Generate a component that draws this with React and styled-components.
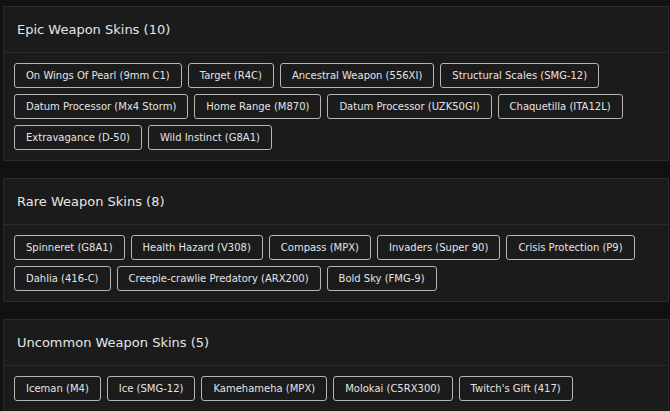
import styled, { createGlobalStyle } from "styled-components";

const GlobalStyle = createGlobalStyle`
  html, body {
    margin: 0;
    padding: 0;
    background-color: #111111;
  }
  body {
    font-family: "DejaVu Sans", "Liberation Sans", sans-serif;
    color: #e2e2e2;
  }
`;

const Page = styled.div`
  display: flex;
  flex-direction: column;
  gap: 17px;
  padding: 6px 1px 0 3px;
`;

const Card = styled.section`
  background-color: #1b1b1b;
  border: 1px solid #2b2b2b;
`;

const CardHeader = styled.header`
  display: flex;
  align-items: center;
  height: 45px;
  padding: 0 13px;
  border-bottom: 1px solid #2b2b2b;
`;

const Title = styled.h2`
  margin: 0;
  font-size: 13px;
  font-weight: 400;
  color: #e6e6e6;
`;

const SkinList = styled.div`
  display: flex;
  flex-wrap: wrap;
  gap: 6px;
  padding: 10px 10px;
`;

const SkinTag = styled.span`
  display: inline-flex;
  align-items: center;
  height: 25px;
  box-sizing: border-box;
  padding: 0 11px;
  border: 1px solid #b5b5b5;
  border-radius: 3px;
  font-size: 10px;
  color: #e4e4e4;
  white-space: nowrap;
`;

const groups = [
  {
    name: "Epic Weapon Skins",
    skins: [
      "On Wings Of Pearl (9mm C1)",
      "Target (R4C)",
      "Ancestral Weapon (556XI)",
      "Structural Scales (SMG-12)",
      "Datum Processor (Mx4 Storm)",
      "Home Range (M870)",
      "Datum Processor (UZK50GI)",
      "Chaquetilla (ITA12L)",
      "Extravagance (D-50)",
      "Wild Instinct (G8A1)",
    ],
  },
  {
    name: "Rare Weapon Skins",
    skins: [
      "Spinneret (G8A1)",
      "Health Hazard (V308)",
      "Compass (MPX)",
      "Invaders (Super 90)",
      "Crisis Protection (P9)",
      "Dahlia (416-C)",
      "Creepie-crawlie Predatory (ARX200)",
      "Bold Sky (FMG-9)",
    ],
  },
  {
    name: "Uncommon Weapon Skins",
    skins: [
      "Iceman (M4)",
      "Ice (SMG-12)",
      "Kamehameha (MPX)",
      "Molokai (C5RX300)",
      "Twitch's Gift (417)",
    ],
  },
];

export default function App() {
  return (
    <>
      <GlobalStyle />
      <Page>
        {groups.map((group) => (
          <Card key={group.name}>
            <CardHeader>
              <Title>
                {group.name} ({group.skins.length})
              </Title>
            </CardHeader>
            <SkinList>
              {group.skins.map((skin) => (
                <SkinTag key={skin}>{skin}</SkinTag>
              ))}
            </SkinList>
          </Card>
        ))}
      </Page>
    </>
  );
}
